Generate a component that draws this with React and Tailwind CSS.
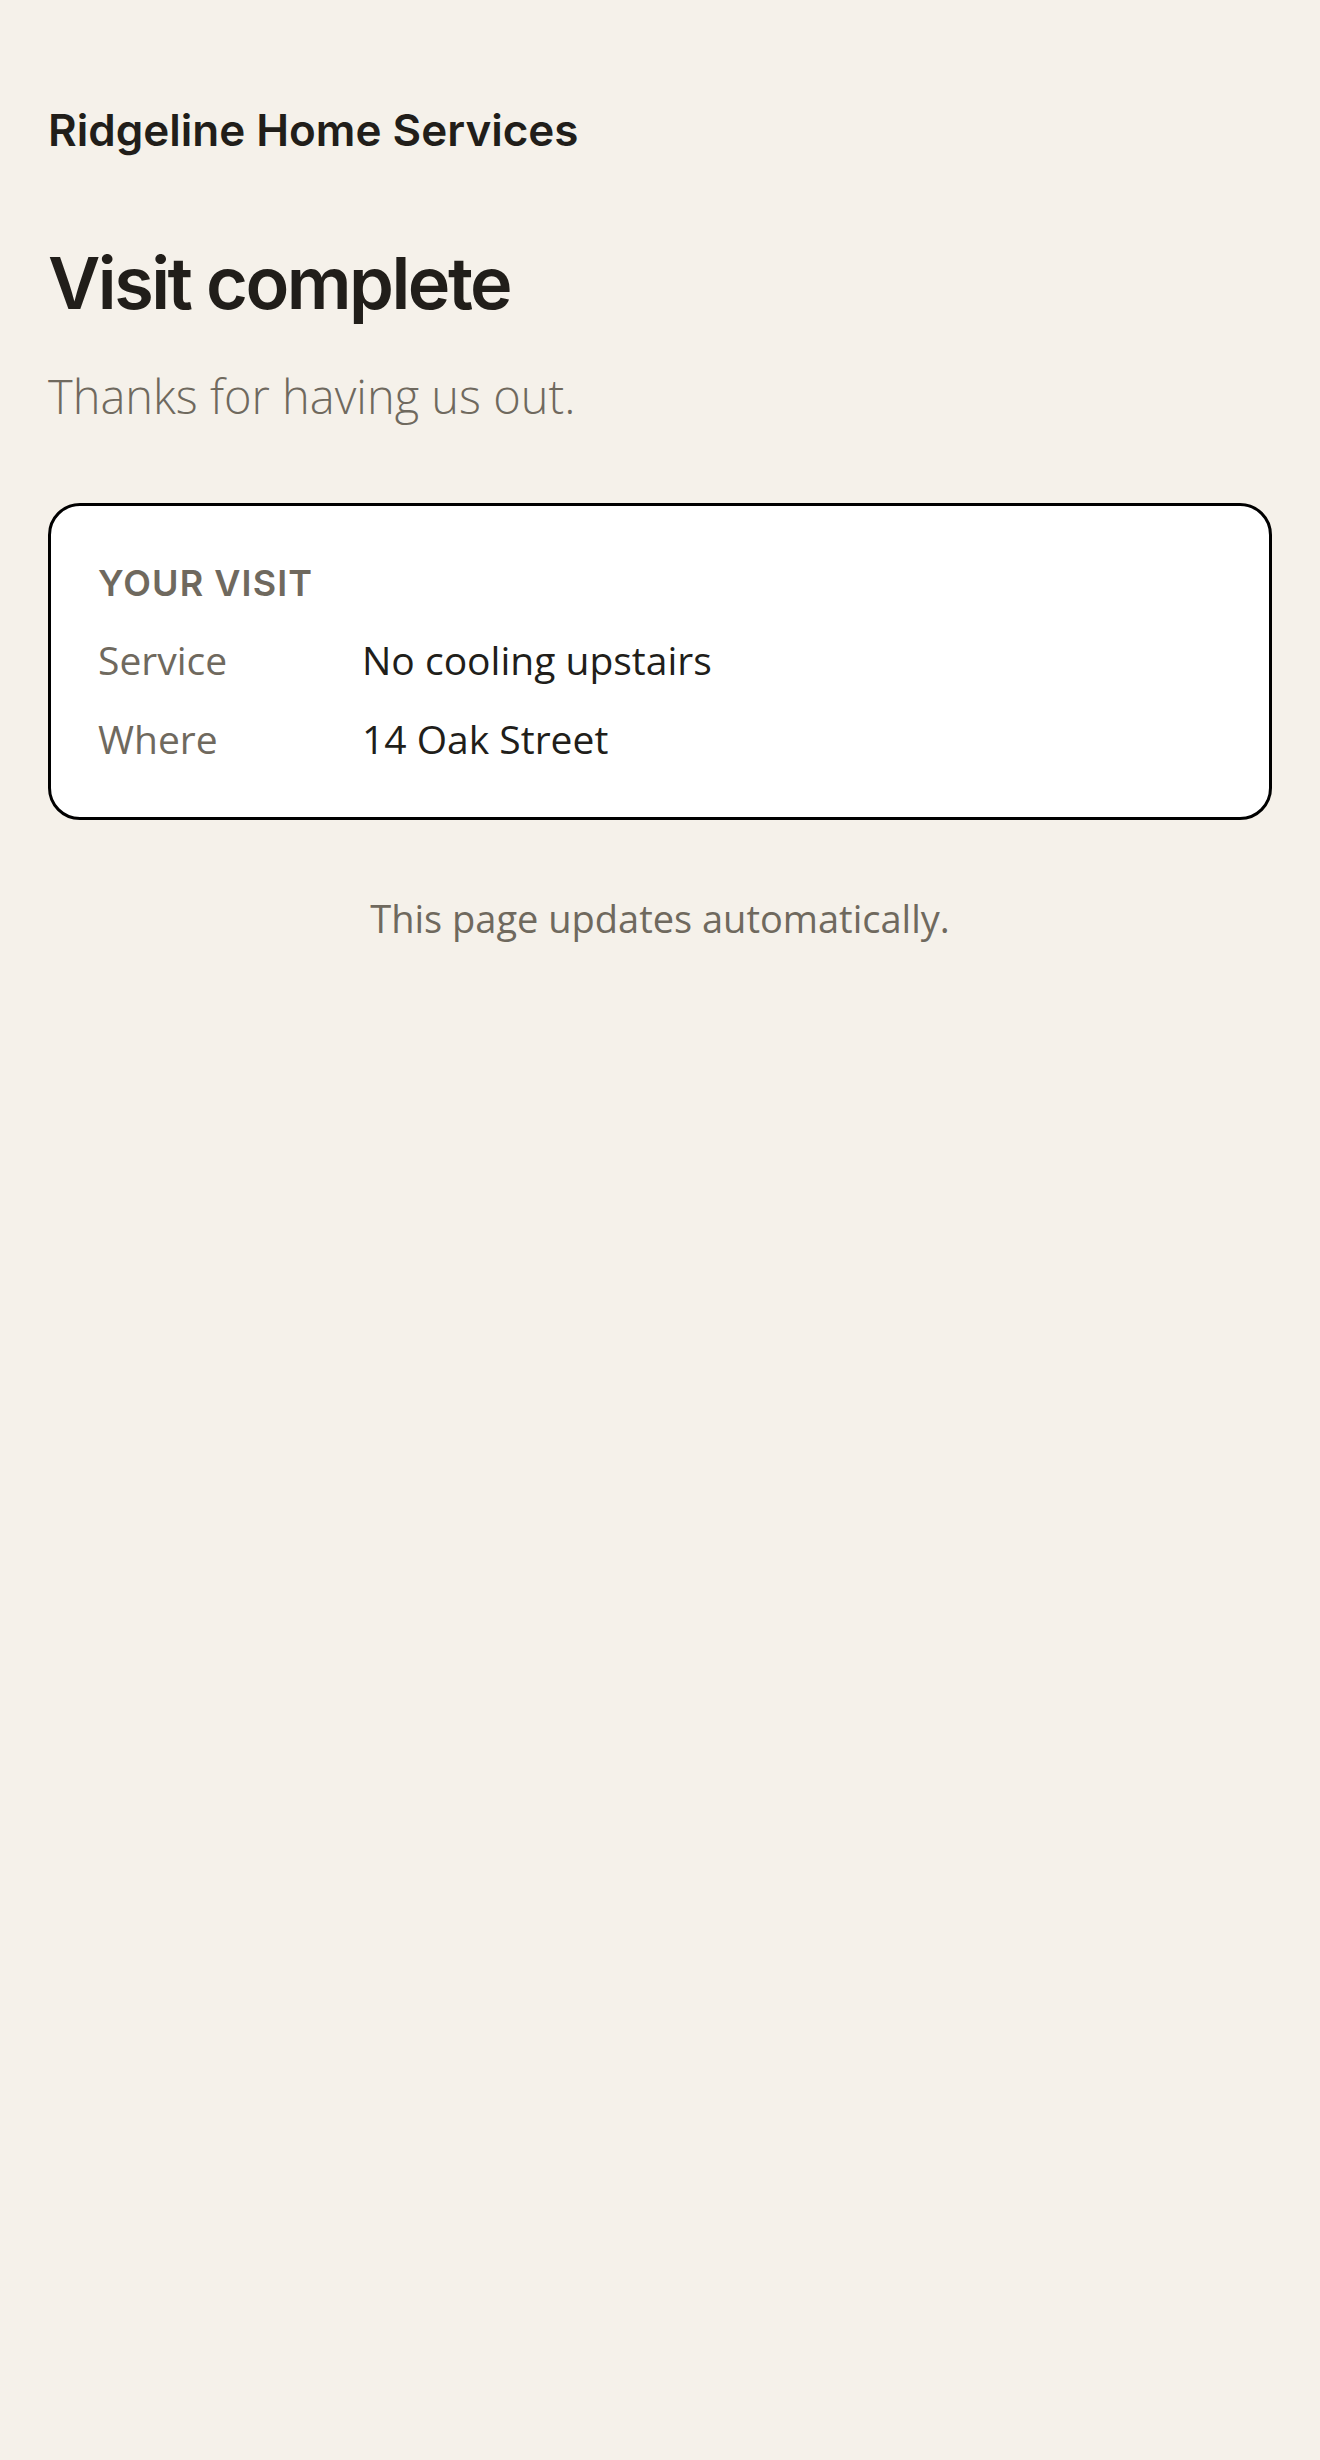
import React from "react";

const visit = [
  { label: "Service", value: "No cooling upstairs" },
  { label: "Where", value: "14 Oak Street" },
];

export default function App() {
  return (
    <div className="min-h-screen bg-[#f5f1ea] text-[#211e1a] font-['Inter',sans-serif]">
      <main className="px-[48px] pt-[104px] pb-16">
        <header>
          <h1 className="text-[44px] leading-[1.2] font-semibold">
            Ridgeline Home Services
          </h1>
        </header>

        <section className="mt-[86px]">
          <h2 className="text-[72px] leading-[1.1] font-semibold tracking-[-0.035em]">Visit complete</h2>
          <p className="mt-[44px] text-[47px] leading-[1.3] text-[#6f695e] font-['Open_Sans',sans-serif] font-light">
            Thanks for having us out.
          </p>
        </section>

        <div className="mt-[76px] rounded-[32px] border-[3px] border-black bg-white px-[47px] pt-[56px] pb-[50px]">
          <h3 className="text-[36px] leading-[1.2] font-semibold uppercase tracking-[0.03em] text-[#6f695e]">
            Your visit
          </h3>
          <dl className="mt-[27px] flex flex-col gap-[22px] font-['Open_Sans',sans-serif] text-[39px] leading-[1.45]">
            {visit.map((row) => (
              <div key={row.label} className="flex">
                <dt className="w-[264px] shrink-0 text-[#6f695e]">{row.label}</dt>
                <dd className="text-[#211e1a]">{row.value}</dd>
              </div>
            ))}
          </dl>
        </div>

        <p className="mt-[70px] text-center font-['Open_Sans',sans-serif] text-[38px] text-[#6f695e]">
          This page updates automatically.
        </p>
      </main>
    </div>
  );
}
